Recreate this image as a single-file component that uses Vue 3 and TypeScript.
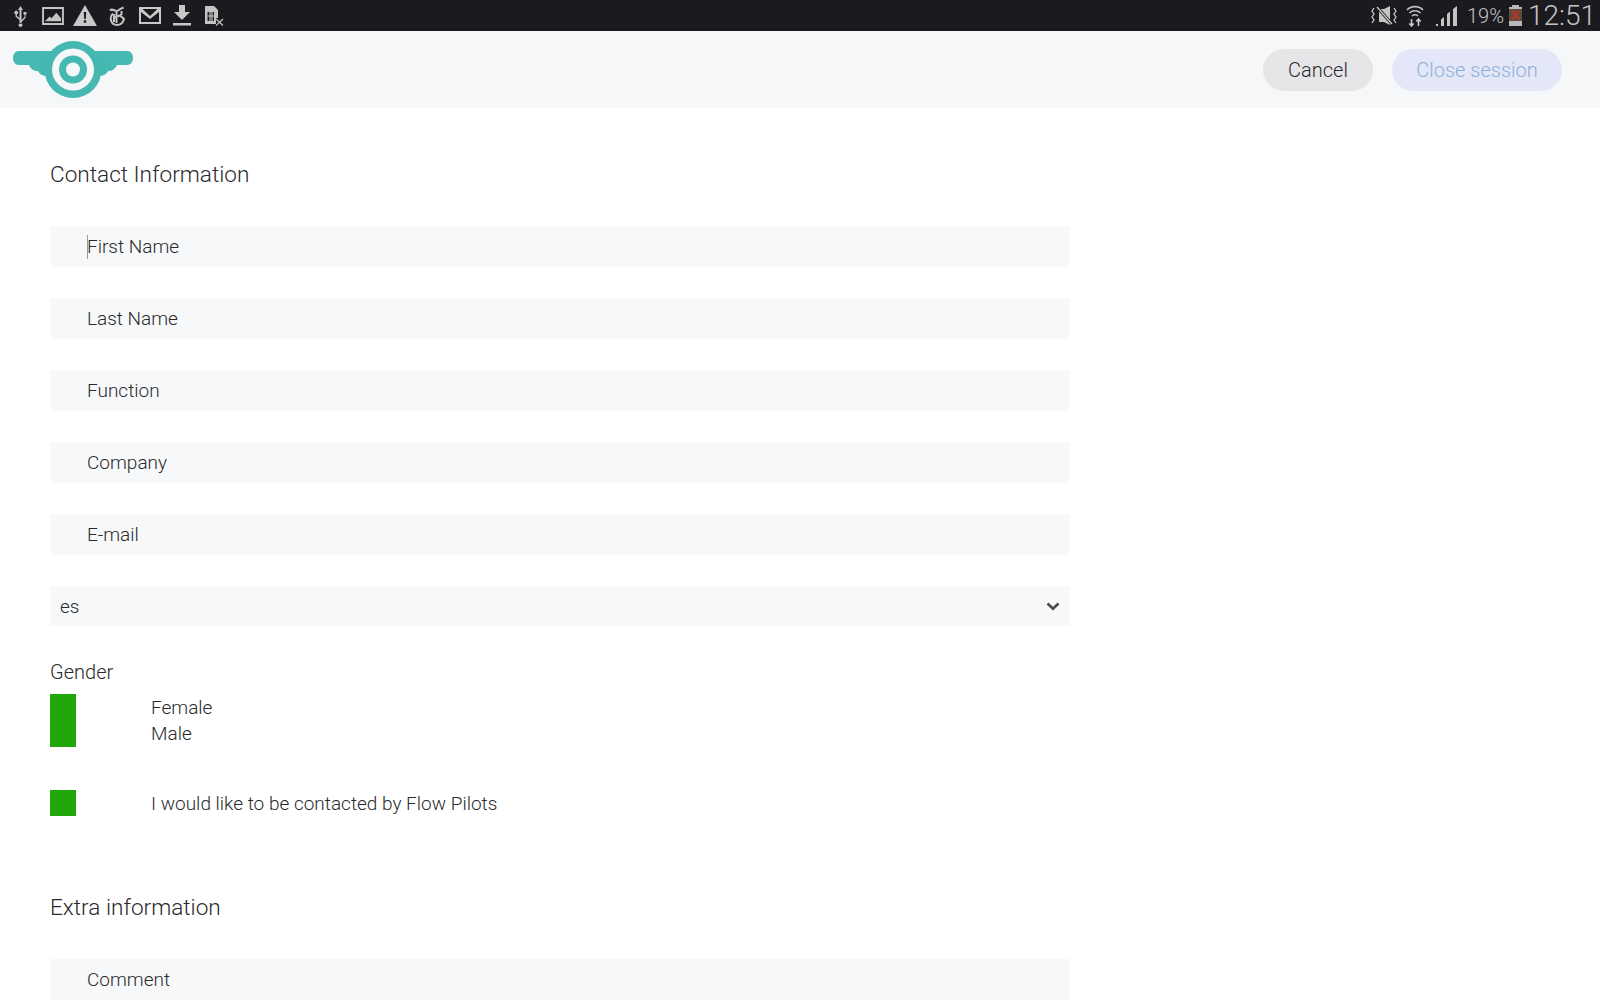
<script setup lang="ts">
const fields: string[] = ['First Name', 'Last Name', 'Function', 'Company', 'E-mail']
</script>

<template>
  <div class="page">
    <div class="status">
      <div class="icons left">
        <svg width="15" height="22" viewBox="0 0 14 22"><path d="M7 1 L9.5 5 H8 V15 L11 12 V9.5 H10 V7 H13 V9.5 H12 V13 L8 17 V19 H6 V15 L2 11.5 V9.3 A1.8 1.8 0 1 1 3.4 9.3 V11 L6 13 V5 H4.5 Z M7 22 A2 2 0 0 0 7 18 A2 2 0 0 0 7 22 Z" fill="#c4c4c4"/></svg>
        <svg width="22" height="18" viewBox="0 0 23 19"><path fill-rule="evenodd" d="M0 0H23V19H0Z M2 2V17H21V2Z" fill="#c4c4c4"/><path d="M3 15 L8 10 L10 12 L15 6 L20 12 V15Z" fill="#c4c4c4"/></svg>
        <svg width="24" height="21" viewBox="0 0 24 21"><path fill-rule="evenodd" d="M12 0 L24 21 H0 Z M10.8 7 L11.2 14 H12.8 L13.2 7 Z M10.8 15.2 V17.8 H13.2 V15.2 Z" fill="#c8c8c8"/></svg>
        <svg width="16" height="20" viewBox="0 0 16 20"><path d="M1 4.5C4 1.5 6 6.5 9 4.5C11 3 12 2.5 14.5 1.5M12.5 5V9M7.5 5V17M4 7.5C0 11 1.5 19 8 19C11 19 14 17 15 13L11 9.5L4 12M5 8V16" fill="none" stroke="#c4c4c4" stroke-width="2"/></svg>
        <svg width="22" height="17" viewBox="0 0 22 17"><path fill-rule="evenodd" d="M0 0H22V17H0Z M2 5V15H20V5L11 12Z M3.5 2 L11 9 L18.5 2Z" fill="#c8c8c8"/></svg>
        <svg width="18" height="21" viewBox="0 0 18 21"><path d="M6 0H12V7H17L9 15 L1 7H6Z M0 18H18V20.5H0Z" fill="#c8c8c8"/></svg>
        <svg width="19" height="20" viewBox="0 0 19 20"><path fill-rule="evenodd" d="M0 0H9L13 4V12H11V18H0Z M2.5 6V15H9V6Z" fill="#c4c4c4"/><path d="M5 6V15M7 6V15M2.5 10H9M11 13L18 19.5M18 13L11 19.5" stroke="#c4c4c4" stroke-width="1.2" fill="none"/></svg>
      </div>
      <div class="icons right">
        <svg class="mute" width="26" height="21" viewBox="0 0 26 21"><path d="M8 4H13L19 1V20L13 17H8Z" fill="#c4c4c4"/><path d="M6 2L21 19" stroke="#1b1b1f" stroke-width="3"/><path d="M6 2L21 19" stroke="#c4c4c4" stroke-width="1.4"/><path d="M3 3L1 6L3 9L1 12L3 15L1 18M23 3L25 6L23 9L25 12L23 15L25 18" fill="none" stroke="#c4c4c4" stroke-width="1.3"/></svg>
        <svg class="wifi" width="18" height="22" viewBox="0 0 18 22"><path d="M1 5C5 0.5 13 0.5 17 5M3.5 8C6.5 5 11.5 5 14.5 8M6 11C7.8 9.5 10.2 9.5 12 11" fill="none" stroke="#bdbdbd" stroke-width="1.6"/><path d="M5.5 14V21M3.3 18.5L5.5 21L7.7 18.5M12.5 21V14M10.3 16.5L12.5 14L14.7 16.5" fill="none" stroke="#c8c8c8" stroke-width="1.6"/></svg>
        <svg class="signal" width="22" height="20" viewBox="0 0 22 20"><path d="M0 18H2V20H0Z M5 13.5L8 11V20H5Z M11 8L14 5.5V20H11Z M17 3L21 0V20H17Z" fill="#c4c4c4"/></svg>
        <span class="pct">19%</span>
        <svg class="batt" width="15" height="21" viewBox="0 0 15 21"><path d="M4 0H11V2H14V21H1V2H4Z" fill="#b8b8b8"/><path d="M1 4H14V16H1Z" fill="#5a4a44"/><path d="M4 5.5L11 14.5M11 5.5L4 14.5" stroke="#b5391f" stroke-width="2.2"/></svg>
        <span class="clock">12:51</span>
      </div>
    </div>

    <header class="topbar">
      <svg class="logo" width="120" height="58" viewBox="13 41 120 58">
        <path d="M19 51H127C135 51 135 65 127 65H117C115 70 111 71 108 71C106 75 103 76 98 76H48C43 76 40 75 38 71C35 71 31 70 29 65H19C11 65 11 51 19 51Z" fill="#45b8b1"/>
        <circle cx="73" cy="69.5" r="28.5" fill="#45b8b1"/>
        <circle cx="73" cy="69.5" r="21" fill="#f6f7f9"/>
        <circle cx="73" cy="69.5" r="14" fill="#45b8b1"/>
        <circle cx="73" cy="69.5" r="7" fill="#f6f7f9"/>
      </svg>
      <div class="actions">
        <button class="btn cancel" type="button">Cancel</button>
        <button class="btn close" type="button">Close session</button>
      </div>
    </header>

    <main class="content">
      <h2 class="title first">Contact Information</h2>
      <div v-for="(f, i) in fields" :key="f" class="field">
        <span v-if="i === 0" class="caret"></span>{{ f }}
      </div>
      <div class="select">
        <span>es</span>
        <svg width="14" height="9" viewBox="0 0 14 9"><path d="M1.5 1.5L7 6.8L12.5 1.5" fill="none" stroke="#4a4a4d" stroke-width="2.6"/></svg>
      </div>
      <div class="label">Gender</div>
      <div class="choice gender">
        <div class="boxes tall"></div>
        <div class="opts">
          <div>Female</div>
          <div>Male</div>
        </div>
      </div>
      <div class="choice contact">
        <div class="boxes"></div>
        <div class="opts">I would like to be contacted by Flow Pilots</div>
      </div>
      <h2 class="title extra">Extra information</h2>
      <div class="field">Comment</div>
    </main>
  </div>
</template>

<style scoped>
.page {
  width: 1600px;
  height: 1000px;
  overflow: hidden;
  background: #fff;
  font-family: Roboto, "Liberation Sans", sans-serif;
  font-weight: 300;
  color: #2a2a2c;
}
.status {
  height: 31px;
  background: #1b1b1f;
  display: flex;
  justify-content: space-between;
  align-items: center;
  padding: 0 4px 0 4px;
}
.icons {
  display: flex;
  align-items: center;
}
.left {
  display: grid;
  grid-template-columns: repeat(7, 32.4px);
  justify-items: center;
}
.right {
  color: #c4c4c4;
}
.wifi {
  margin-left: 9px;
}
.signal {
  margin-left: 12px;
}
.pct {
  font-size: 20px;
  margin-left: 9px;
}
.batt {
  margin-left: 4px;
}
.clock {
  font-size: 28px;
  margin-left: 5px;
}
.topbar {
  height: 77px;
  background: #f6f7f9;
  display: flex;
  justify-content: space-between;
  align-items: center;
  padding: 0 38px 0 13px;
}
.actions {
  display: flex;
  gap: 19px;
}
.btn {
  height: 42px;
  border: none;
  border-radius: 21px;
  font: inherit;
  font-size: 20px;
  padding: 0;
  white-space: nowrap;
}
.cancel {
  width: 110px;
  background: #e6e6e8;
  color: #2a2a2c;
}
.close {
  width: 170px;
  background: #e4e7f8;
  color: #8fb0d6;
}
.content {
  padding: 0 50px;
  width: 1020px;
}
.title {
  margin: 0;
  font-size: 22.6px;
  font-weight: 300;
  line-height: 30px;
}
.title.first {
  padding-top: 52px;
  margin-bottom: 36px;
}
.field,
.select {
  height: 41px;
  background: #f7f8fa;
  font-size: 19px;
  display: flex;
  align-items: center;
  padding-left: 37px;
  margin-bottom: 31px;
  position: relative;
}
.caret {
  position: absolute;
  left: 37px;
  top: 9px;
  width: 1px;
  height: 24px;
  background: #9a9a9d;
}
.select {
  height: 40px;
  padding: 0 10px;
  justify-content: space-between;
  margin-bottom: 0;
}
.label {
  font-size: 20px;
  line-height: 28px;
  margin-top: 32px;
  margin-bottom: 8px;
}
.choice {
  display: flex;
  font-size: 19px;
  line-height: 26px;
}
.opts {
  padding-top: 1px;
}
.boxes {
  width: 26px;
  height: 26px;
  background: #22a70a;
  margin-right: 75px;
  flex: none;
}
.boxes.tall {
  height: 53px;
}
.contact {
  margin-top: 43px;
}
.title.extra {
  margin-top: 76px;
  margin-bottom: 36px;
}
</style>
